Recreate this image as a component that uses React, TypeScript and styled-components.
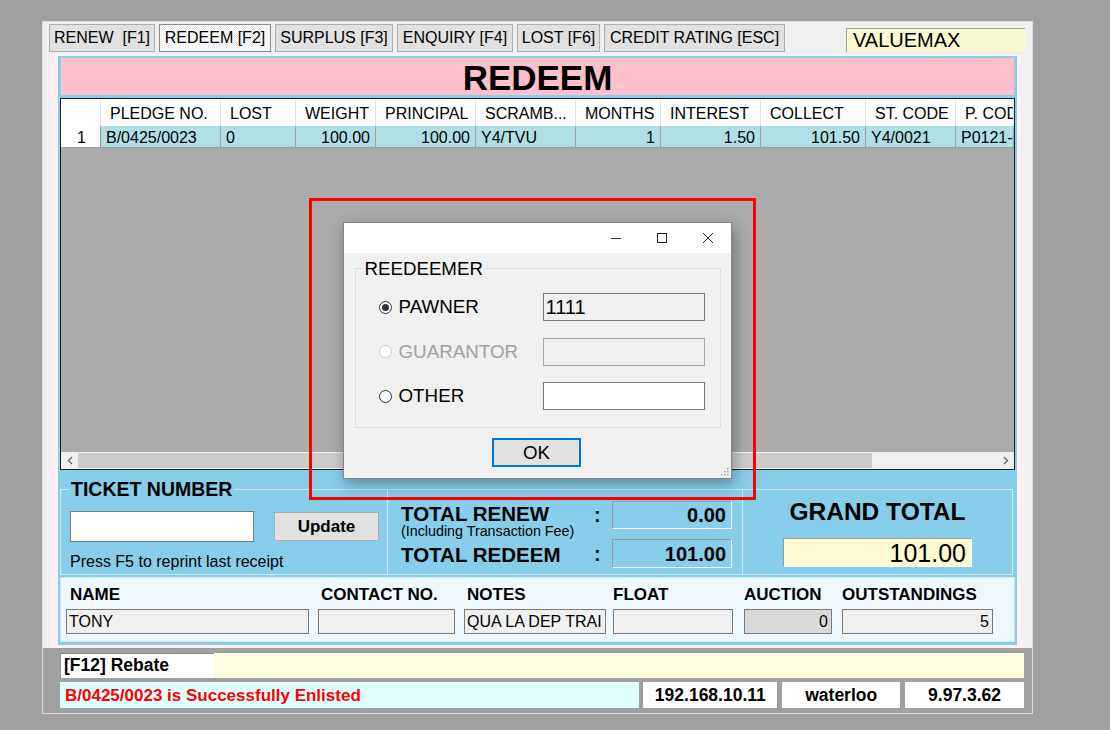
import React from 'react';
import styled, { createGlobalStyle } from 'styled-components';

const GlobalStyle = createGlobalStyle`
  html, body { margin: 0; padding: 0; background: #a0a0a0; }
  body { font-family: "Liberation Sans", Arial, sans-serif; color: #000; }
  * { box-sizing: border-box; }
`;

const Window = styled.div`
  position: relative;
  margin: 21px 0 0 42px;
  width: 991px;
  height: 693px;
  border: 1px solid #dcdcdc;
  background: #a0a0a0;
  display: flex;
  flex-direction: column;
`;

/* ---------- tabs ---------- */

const TopStrip = styled.div`
  height: 32px;
  flex: none;
  background: #f0f0f0;
  display: flex;
  align-items: flex-start;
  gap: 4px;
  padding: 2px 7px 0 6px;
`;

const Tab = styled.div<{ $w: number; $active?: boolean }>`
  width: ${p => p.$w}px;
  height: 28px;
  font-size: 16px;
  line-height: 26px;
  text-align: center;
  white-space: pre;
  border: 1px solid ${p => (p.$active ? '#8c8c8c' : '#adadad')};
  background: ${p =>
    p.$active ? 'repeating-conic-gradient(#ffffff 0 25%, #ececec 0 50%) 0 0 / 2px 2px' : '#e1e1e1'};
`;

const Brand = styled.div`
  margin: 4px 0 0 auto;
  width: 179px;
  height: 24px;
  background: #fafad2;
  border-top: 1px solid #a0a0a0;
  border-left: 1px solid #a0a0a0;
  font-size: 20px;
  line-height: 23px;
  padding-left: 6px;
`;

/* ---------- main panel ---------- */

const MiddleArea = styled.div`
  height: 594px;
  flex: none;
  background: #f0f0f0;
  padding: 0 9px 0 7px;
`;

const OuterPanel = styled.div`
  height: 100%;
  background: #fff0f5;
  padding: 2px 6px 3px 8px;
`;

const SkyPanel = styled.div`
  height: 100%;
  background: #87ceeb;
  padding: 2px 2px 3px;
  display: flex;
  flex-direction: column;
`;

const Banner = styled.div`
  height: 37px;
  margin: 0 1px;
  background: #ffc0cb;
  text-align: center;
  font-size: 35px;
  font-weight: bold;
  line-height: 39px;
`;

const Grid = styled.div`
  margin-top: 3px;
  height: 372px;
  flex: none;
  border: 1px solid #1e1e1e;
  background: #ababab;
  display: flex;
  flex-direction: column;
  overflow: hidden;
`;

const GridRow = styled.div`
  display: flex;
  flex: none;
`;

const HeadCell = styled.div<{ $w: number }>`
  width: ${p => p.$w}px;
  flex: none;
  height: 27px;
  line-height: 29px;
  font-size: 16px;
  padding-left: 9px;
  background: #fff;
  border-right: 1px solid #e2e2e2;
  white-space: nowrap;
  overflow: hidden;
`;

const Cell = styled.div<{ $w: number; $right?: boolean; $head?: boolean }>`
  width: ${p => p.$w}px;
  flex: none;
  height: 22px;
  line-height: 23px;
  font-size: 16px;
  padding: 0 ${p => (p.$head ? 14 : 5)}px 0 ${p => (p.$head ? 0 : 5)}px;
  text-align: ${p => (p.$right || p.$head ? 'right' : 'left')};
  background: ${p => (p.$head ? '#fff' : '#b0e0e6')};
  border-right: 1px solid #a0a0a0;
  border-bottom: 1px solid #a0a0a0;
  white-space: nowrap;
  overflow: hidden;
`;

const GridFill = styled.div`
  flex: 1;
`;

const HScroll = styled.div`
  height: 17px;
  flex: none;
  background: #f0f0f0;
  display: flex;
  align-items: stretch;
`;

const ScrollButton = styled.div`
  width: 17px;
  display: flex;
  align-items: center;
  justify-content: center;
`;

const ScrollThumb = styled.div<{ $w: number }>`
  width: ${p => p.$w}px;
  margin: 1px 0;
  background: #cdcdcd;
`;

const ScrollTrack = styled.div`
  flex: 1;
`;

/* ---------- totals ---------- */

const TotalsRow = styled.div`
  height: 105px;
  flex: none;
  padding-top: 19px;
  display: flex;
`;

const GroupBox = styled.div<{ $w: number; $first?: boolean }>`
  position: relative;
  width: ${p => p.$w}px;
  height: 86px;
  border: 1px solid #c9e9f6;
  border-left-width: ${p => (p.$first ? 1 : 0)}px;
`;

const SkyLegend = styled.div`
  position: absolute;
  left: 8px;
  top: -12px;
  padding: 0 2px;
  background: #87ceeb;
  font-size: 19.5px;
  font-weight: bold;
  line-height: 22px;
`;

const TicketBody = styled.div`
  padding: 21px 0 0 9px;
`;

const TicketLine = styled.div`
  display: flex;
  align-items: center;
`;

const TextInput = styled.div<{ $w: number }>`
  width: ${p => p.$w}px;
  height: 31px;
  background: #fff;
  border: 1px solid #7a7a7a;
`;

const UpdateButton = styled.div`
  margin-left: 20px;
  width: 105px;
  height: 29px;
  background: #e1e1e1;
  border: 1px solid #adadad;
  font-size: 17px;
  font-weight: bold;
  line-height: 28px;
  text-align: center;
`;

const Hint = styled.div`
  margin-top: 10px;
  font-size: 16px;
  line-height: 19px;
`;

const TotalsBody = styled.div`
  padding: 11px 0 0 13px;
  display: flex;
  flex-direction: column;
  gap: 1px;
`;

const TotalLine = styled.div<{ $top?: boolean }>`
  display: flex;
  align-items: ${p => (p.$top ? 'flex-start' : 'center')};
`;

const TotalLabel = styled.div`
  width: 193px;
  padding-top: 3px;
`;

const TotalTitle = styled.div`
  font-size: 20.5px;
  font-weight: bold;
  line-height: 20px;
`;

const TotalSub = styled.div`
  font-size: 14.3px;
  line-height: 14px;
`;

const Colon = styled.div`
  width: 18px;
  font-size: 20px;
  font-weight: bold;
  line-height: 28px;
`;

const ValueBox = styled.div<{ $w: number; $h: number; $size: number; $bg: string; $bold?: boolean }>`
  width: ${p => p.$w}px;
  height: ${p => p.$h}px;
  background: ${p => p.$bg};
  border-top: 1px solid #9a9a9a;
  border-left: 1px solid #9a9a9a;
  border-right: 1px solid #fff;
  border-bottom: 1px solid #fff;
  font-size: ${p => p.$size}px;
  font-weight: ${p => (p.$bold ? 'bold' : 'normal')};
  line-height: ${p => p.$h - 1}px;
  text-align: right;
  padding-right: 5px;
`;

const GrandBody = styled.div`
  padding-top: 8px;
  display: flex;
  flex-direction: column;
  align-items: center;
`;

const GrandTitle = styled.div`
  font-size: 24.5px;
  font-weight: bold;
  line-height: 28px;
  margin-bottom: 12px;
`;

/* ---------- customer row ---------- */

const CustomerArea = styled.div`
  margin-top: 2px;
  height: 65px;
  flex: none;
  background: #f0f8ff;
  border: 1px solid #d3e5f0;
  display: flex;
  padding: 7px 0 0 4px;
`;

const Field = styled.div<{ $w: number; $gap: number }>`
  width: ${p => p.$w}px;
  margin-left: ${p => p.$gap}px;
  flex: none;
`;

const FieldLabel = styled.div<{ $lp: number }>`
  padding-left: ${p => p.$lp}px;
  font-size: 17px;
  font-weight: bold;
  line-height: 20px;
  height: 20px;
  white-space: nowrap;
`;

const FieldBox = styled.div<{ $right?: boolean; $dark?: boolean }>`
  margin-top: 4px;
  height: 25px;
  background: ${p => (p.$dark ? '#d9d9d9' : '#f0f0f0')};
  border: 1px solid #7a7a7a;
  font-size: 16px;
  line-height: 24px;
  padding: 0 3px 0 2px;
  text-align: ${p => (p.$right ? 'right' : 'left')};
  white-space: nowrap;
  overflow: hidden;
`;

/* ---------- bottom bars ---------- */

const BottomArea = styled.div`
  flex: 1;
  padding: 5px 8px 0 17px;
  display: flex;
  flex-direction: column;
  gap: 4px;
`;

const RebateBar = styled.div`
  height: 25px;
  display: flex;
  background: #ffffe0;
`;

const RebateLabel = styled.div`
  width: 154px;
  background: #fff;
  border-top: 1px solid #8c8c8c;
  border-left: 1px solid #8c8c8c;
  font-size: 17.5px;
  font-weight: bold;
  line-height: 23px;
  padding-left: 3px;
`;

const StatusBar = styled.div`
  height: 26px;
  display: flex;
  gap: 4px;
`;

const StatusMessage = styled.div`
  width: 580px;
  background: #e0ffff;
  color: #ff0000;
  font-size: 17px;
  font-weight: bold;
  line-height: 27px;
  padding-left: 5px;
`;

const StatusCell = styled.div<{ $w: number; $gap?: number }>`
  width: ${p => p.$w}px;
  margin-left: ${p => p.$gap ?? 0}px;
  background: #fff;
  font-size: 17.5px;
  font-weight: bold;
  line-height: 27px;
  text-align: center;
`;

/* ---------- dialog ---------- */

const Highlight = styled.div`
  position: absolute;
  left: 266px;
  top: 176px;
  width: 447px;
  height: 302px;
  border: 3px solid #ff0000;
`;

const Dialog = styled.div`
  position: absolute;
  left: 300px;
  top: 200px;
  width: 389px;
  height: 257px;
  background: #f0f0f0;
  border: 1px solid #858585;
  box-shadow: 2px 5px 14px rgba(0, 0, 0, 0.35);
  display: flex;
  flex-direction: column;
  align-items: center;
`;

const TitleBar = styled.div`
  align-self: stretch;
  height: 30px;
  background: #fff;
  display: flex;
  justify-content: flex-end;
`;

const TitleButton = styled.div`
  width: 46px;
  display: flex;
  align-items: center;
  justify-content: center;
`;

const DialogGroup = styled.div`
  position: relative;
  margin-top: 15px;
  width: 366px;
  height: 160px;
  border: 1px solid #dcdcdc;
  padding: 24px 0 0 23px;
  display: grid;
  grid-template-columns: 13px 151px 162px;
  grid-auto-rows: 28px;
  row-gap: 16.5px;
  align-items: center;
`;

const DialogLegend = styled.div`
  position: absolute;
  left: 7px;
  top: -11px;
  padding: 0 2px;
  background: #f0f0f0;
  font-size: 18.7px;
  line-height: 22px;
`;

const Radio = styled.div<{ $checked?: boolean; $disabled?: boolean }>`
  width: 13px;
  height: 13px;
  border-radius: 50%;
  border: 1px solid ${p => (p.$disabled ? '#cccccc' : '#333')};
  background: #fff;
  display: flex;
  align-items: center;
  justify-content: center;

  &::after {
    content: '';
    width: 7px;
    height: 7px;
    border-radius: 50%;
    background: ${p => (p.$checked ? '#333' : 'transparent')};
  }
`;

const RadioLabel = styled.div<{ $disabled?: boolean }>`
  padding-left: 7px;
  font-size: 18.8px;
  line-height: 22px;
  color: ${p => (p.$disabled ? '#a0a0a0' : '#000')};
`;

const DialogInput = styled.div<{ $bg: string; $disabled?: boolean }>`
  height: 28px;
  background: ${p => p.$bg};
  border: 1px solid ${p => (p.$disabled ? '#a8a8a8' : '#7a7a7a')};
  font-size: 20px;
  line-height: 26px;
  padding-left: 2px;
`;

const OkButton = styled.div`
  margin: 10px 2px 0 0;
  width: 89px;
  height: 29px;
  background: #e1e1e1;
  border: 2px solid #0078d7;
  font-size: 18.7px;
  line-height: 25px;
  text-align: center;
`;

const Grip = styled.svg`
  position: absolute;
  right: 2px;
  bottom: 2px;
`;

/* ---------- data ---------- */

const tabs = [
  { label: 'RENEW  [F1]', w: 106 },
  { label: 'REDEEM [F2]', w: 112, active: true },
  { label: 'SURPLUS [F3]', w: 118 },
  { label: 'ENQUIRY [F4]', w: 116 },
  { label: 'LOST [F6]', w: 83 },
  { label: 'CREDIT RATING [ESC]', w: 181 },
];

const columns = [
  { title: '', w: 40 },
  { title: 'PLEDGE NO.', w: 120 },
  { title: 'LOST', w: 75 },
  { title: 'WEIGHT', w: 80 },
  { title: 'PRINCIPAL', w: 100 },
  { title: 'SCRAMB...', w: 100 },
  { title: 'MONTHS', w: 85 },
  { title: 'INTEREST', w: 100 },
  { title: 'COLLECT', w: 105 },
  { title: 'ST. CODE', w: 90 },
  { title: 'P. CODE', w: 58 },
];

const row = [
  { v: 'B/0425/0023' },
  { v: '0' },
  { v: '100.00', right: true },
  { v: '100.00', right: true },
  { v: 'Y4/TVU' },
  { v: '1', right: true },
  { v: '1.50', right: true },
  { v: '101.50', right: true },
  { v: 'Y4/0021' },
  { v: 'P0121-0001' },
];

const fields = [
  { label: 'NAME', value: 'TONY', w: 243, gap: 1, lp: 4 },
  { label: 'CONTACT NO.', value: '', w: 137, gap: 9, lp: 3 },
  { label: 'NOTES', value: 'QUA LA DEP TRAI', w: 142, gap: 9, lp: 3 },
  { label: 'FLOAT', value: '', w: 120, gap: 7, lp: 0 },
  { label: 'AUCTION', value: '0', w: 88, gap: 11, lp: 0, right: true, dark: true },
  { label: 'OUTSTANDINGS', value: '5', w: 151, gap: 10, lp: 0, right: true },
];

const Chevron = ({ dir }: { dir: 'left' | 'right' }) => (
  <svg width="6" height="9" viewBox="0 0 6 9">
    <polyline
      points={dir === 'left' ? '5,1 1.5,4.5 5,8' : '1,1 4.5,4.5 1,8'}
      fill="none"
      stroke="#606060"
      strokeWidth="1.3"
    />
  </svg>
);

export default function App() {
  return (
    <>
      <GlobalStyle />
      <Window>
        <TopStrip>
          {tabs.map(t => (
            <Tab key={t.label} $w={t.w} $active={t.active}>
              {t.label}
            </Tab>
          ))}
          <Brand>VALUEMAX</Brand>
        </TopStrip>

        <MiddleArea>
          <OuterPanel>
            <SkyPanel>
              <Banner>REDEEM</Banner>

              <Grid>
                <GridRow>
                  {columns.map((c, i) => (
                    <HeadCell key={i} $w={c.w}>
                      {c.title}
                    </HeadCell>
                  ))}
                </GridRow>
                <GridRow>
                  <Cell $w={columns[0].w} $head>
                    1
                  </Cell>
                  {row.map((c, i) => (
                    <Cell key={i} $w={columns[i + 1].w} $right={c.right}>
                      {c.v}
                    </Cell>
                  ))}
                </GridRow>
                <GridFill />
                <HScroll>
                  <ScrollButton>
                    <Chevron dir="left" />
                  </ScrollButton>
                  <ScrollThumb $w={794} />
                  <ScrollTrack />
                  <ScrollButton>
                    <Chevron dir="right" />
                  </ScrollButton>
                </HScroll>
              </Grid>

              <TotalsRow>
                <GroupBox $w={328} $first>
                  <SkyLegend>TICKET NUMBER</SkyLegend>
                  <TicketBody>
                    <TicketLine>
                      <TextInput $w={184} />
                      <UpdateButton>Update</UpdateButton>
                    </TicketLine>
                    <Hint>Press F5 to reprint last receipt</Hint>
                  </TicketBody>
                </GroupBox>

                <GroupBox $w={355}>
                  <TotalsBody>
                    <TotalLine $top>
                      <TotalLabel>
                        <TotalTitle>TOTAL RENEW</TotalTitle>
                        <TotalSub>(Including Transaction Fee)</TotalSub>
                      </TotalLabel>
                      <Colon>:</Colon>
                      <ValueBox $w={120} $h={28} $size={20} $bg="#87ceeb" $bold>
                        0.00
                      </ValueBox>
                    </TotalLine>
                    <TotalLine>
                      <TotalLabel>
                        <TotalTitle>TOTAL REDEEM</TotalTitle>
                      </TotalLabel>
                      <Colon>:</Colon>
                      <ValueBox $w={120} $h={29} $size={20} $bg="#87ceeb" $bold>
                        101.00
                      </ValueBox>
                    </TotalLine>
                  </TotalsBody>
                </GroupBox>

                <GroupBox $w={270}>
                  <GrandBody>
                    <GrandTitle>GRAND TOTAL</GrandTitle>
                    <ValueBox $w={189} $h={29} $size={25} $bg="#fffad2">
                      101.00
                    </ValueBox>
                  </GrandBody>
                </GroupBox>
              </TotalsRow>

              <CustomerArea>
                {fields.map(f => (
                  <Field key={f.label} $w={f.w} $gap={f.gap}>
                    <FieldLabel $lp={f.lp}>{f.label}</FieldLabel>
                    <FieldBox $right={f.right} $dark={f.dark}>
                      {f.value}
                    </FieldBox>
                  </Field>
                ))}
              </CustomerArea>
            </SkyPanel>
          </OuterPanel>
        </MiddleArea>

        <BottomArea>
          <RebateBar>
            <RebateLabel>[F12] Rebate</RebateLabel>
          </RebateBar>
          <StatusBar>
            <StatusMessage>B/0425/0023 is Successfully Enlisted</StatusMessage>
            <StatusCell $w={134}>192.168.10.11</StatusCell>
            <StatusCell $w={118} $gap={1}>
              waterloo
            </StatusCell>
            <StatusCell $w={119} $gap={1}>
              9.97.3.62
            </StatusCell>
          </StatusBar>
        </BottomArea>

        <Highlight />

        <Dialog>
          <TitleBar>
            <TitleButton>
              <svg width="12" height="12" viewBox="0 0 12 12">
                <line x1="1" y1="6.5" x2="11" y2="6.5" stroke="#222" strokeWidth="1" />
              </svg>
            </TitleButton>
            <TitleButton>
              <svg width="12" height="12" viewBox="0 0 12 12">
                <rect x="1.5" y="1.5" width="9" height="9" fill="none" stroke="#222" strokeWidth="1" />
              </svg>
            </TitleButton>
            <TitleButton>
              <svg width="12" height="12" viewBox="0 0 12 12">
                <path d="M1 1 L11 11 M11 1 L1 11" stroke="#222" strokeWidth="1" />
              </svg>
            </TitleButton>
          </TitleBar>

          <DialogGroup>
            <DialogLegend>REEDEEMER</DialogLegend>
            <Radio $checked />
            <RadioLabel>PAWNER</RadioLabel>
            <DialogInput $bg="#f0f0f0">1111</DialogInput>
            <Radio $disabled />
            <RadioLabel $disabled>GUARANTOR</RadioLabel>
            <DialogInput $bg="#f0f0f0" $disabled />
            <Radio />
            <RadioLabel>OTHER</RadioLabel>
            <DialogInput $bg="#ffffff" />
          </DialogGroup>

          <OkButton>OK</OkButton>

          <Grip width="9" height="9" viewBox="0 0 9 9">
            {[
              [7, 1],
              [7, 4],
              [4, 4],
              [7, 7],
              [4, 7],
              [1, 7],
            ].map(([x, y]) => (
              <rect key={`${x}-${y}`} x={x} y={y} width="1.5" height="1.5" fill="#a0a0a0" />
            ))}
          </Grip>
        </Dialog>
      </Window>
    </>
  );
}
